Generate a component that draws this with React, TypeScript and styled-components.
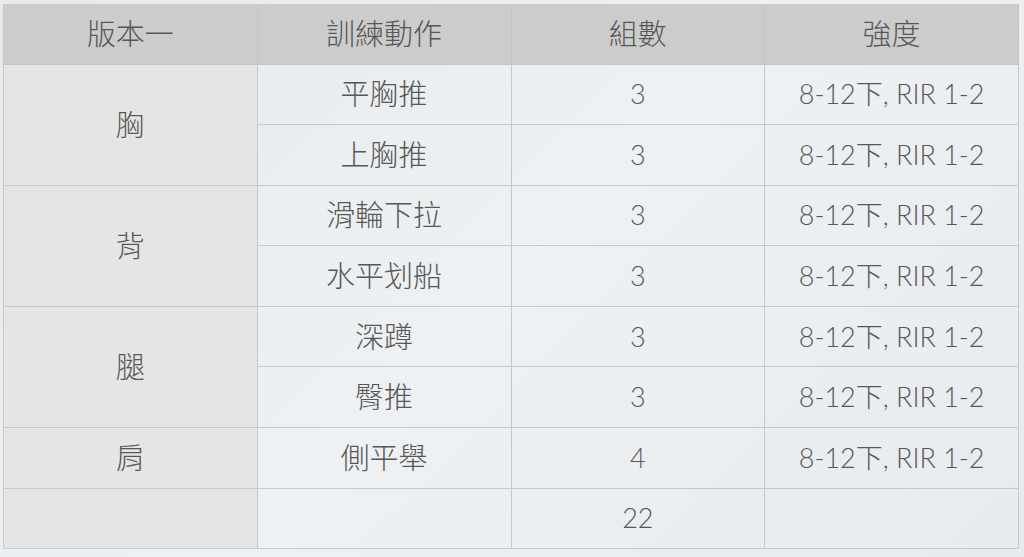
import React from "react";
import styled, { createGlobalStyle } from "styled-components";

const Global = createGlobalStyle`
  html, body { margin: 0; padding: 0; }
  body {
    width: 1024px;
    height: 557px;
    overflow: hidden;
    background: linear-gradient(135deg, #e6eaed 0%, #eef1f3 50%, #e7ebee 100%);
    font-family: "Lato", "Noto Sans CJK TC", sans-serif;
  }
`;

const Page = styled.div`
  padding: 4px 5px 0 3px;
`;

const Table = styled.table`
  border-collapse: collapse;
  table-layout: fixed;
  width: 1016px;
  color: #575757;
  font-size: 29px;
  line-height: 30px;
`;

const Row = styled.tr<{ $h: number }>`
  height: ${(p) => p.$h}px;
`;

const Head = styled.th`
  background: #cccccc;
  font-weight: 300;
  border: 1px solid #c4c4c4;
  border-top: none;
  text-align: center;
  padding: 0;
`;

const Cell = styled.td<{ $side?: boolean; $small?: boolean }>`
  background: ${(p) => (p.$side ? "#e5e5e5" : "transparent")};
  border: 1px solid #c8c8c8;
  text-align: center;
  padding: 0;
  font-weight: 300;
  font-size: ${(p) => (p.$small ? "27px" : "inherit")};
`;

type R = { group?: string; span?: number; move: string; sets: string; inten: string };

const rows: R[] = [
  { group: "胸", span: 2, move: "平胸推", sets: "3", inten: "8-12下, RIR 1-2" },
  { move: "上胸推", sets: "3", inten: "8-12下, RIR 1-2" },
  { group: "背", span: 2, move: "滑輪下拉", sets: "3", inten: "8-12下, RIR 1-2" },
  { move: "水平划船", sets: "3", inten: "8-12下, RIR 1-2" },
  { group: "腿", span: 2, move: "深蹲", sets: "3", inten: "8-12下, RIR 1-2" },
  { move: "臀推", sets: "3", inten: "8-12下, RIR 1-2" },
  { group: "肩", span: 1, move: "側平舉", sets: "4", inten: "8-12下, RIR 1-2" },
  { group: "", span: 1, move: "", sets: "22", inten: "" },
];

export default function App() {
  return (
    <Page>
      <Global />
      <Table>
        <thead>
          <Row $h={60}>
            <Head>版本一</Head>
            <Head>訓練動作</Head>
            <Head>組數</Head>
            <Head>強度</Head>
          </Row>
        </thead>
        <tbody>
          {rows.map((r, i) => (
            <Row $h={60.6} key={i}>
              {r.group !== undefined && (
                <Cell $side rowSpan={r.span}>
                  {r.group}
                </Cell>
              )}
              <Cell>{r.move}</Cell>
              <Cell $small>{r.sets}</Cell>
              <Cell $small>{r.inten}</Cell>
            </Row>
          ))}
        </tbody>
      </Table>
    </Page>
  );
}
